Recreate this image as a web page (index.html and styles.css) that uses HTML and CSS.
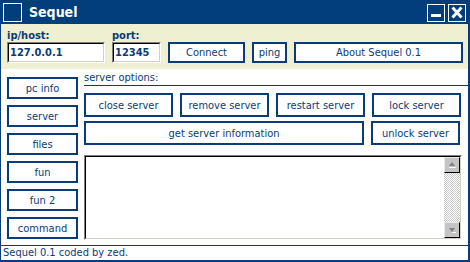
FILE: index.html
```html
<!DOCTYPE html>
<html>
<head>
<meta charset="utf-8">
<link rel="stylesheet" href="styles.css">
</head>
<body>
<div class="window">
  <div class="titlebar">
    <span class="appicon"></span>
    <span class="title">Sequel</span>
    <div class="tb-buttons">
      <span class="tb-btn"><svg width="16" height="16" viewBox="0 0 16 16"><rect x="3" y="9" width="10" height="3" fill="#fff"/></svg></span>
      <span class="tb-btn"><svg width="16" height="16" viewBox="0 0 16 16"><path d="M3.5 2.5 L12.5 12.5 M12.5 2.5 L3.5 12.5" stroke="#fff" stroke-width="3" fill="none"/></svg></span>
    </div>
  </div>
  <div class="frame">
    <div class="conn">
      <div class="field host">
        <label>ip/host:</label>
        <div class="sunken"><div class="input">127.0.0.1</div></div>
      </div>
      <div class="field port">
        <label>port:</label>
        <div class="sunken"><div class="input">12345</div></div>
      </div>
      <button class="btn connect">Connect</button>
      <button class="btn ping">ping</button>
      <button class="btn about">About Sequel 0.1</button>
    </div>
    <div class="main">
      <div class="nav">
        <button class="btn nav-btn">pc info</button>
        <button class="btn nav-btn">server</button>
        <button class="btn nav-btn">files</button>
        <button class="btn nav-btn">fun</button>
        <button class="btn nav-btn">fun 2</button>
        <button class="btn nav-btn">command</button>
      </div>
      <div class="options">
        <div class="legend">server options:</div>
        <div class="row row1">
          <button class="btn opt">close server</button>
          <button class="btn opt">remove server</button>
          <button class="btn opt">restart server</button>
          <button class="btn opt">lock server</button>
        </div>
        <div class="row row2">
          <button class="btn opt wide">get server information</button>
          <button class="btn opt">unlock server</button>
        </div>
        <div class="log sunken">
          <div class="log-inner">
            <div class="log-text"></div>
            <div class="scrollbar">
              <div class="sb-btn"><svg width="14" height="14" viewBox="0 0 14 14"><path d="M7 4 L10 8 L4 8 Z" fill="#808080"/><rect x="4" y="9" width="7" height="1" fill="#fff"/></svg></div>
              <div class="sb-track"></div>
              <div class="sb-btn"><svg width="14" height="14" viewBox="0 0 14 14"><path d="M4 5 L10 5 L7 9 Z" fill="#808080"/><rect x="7" y="9" width="4" height="1" fill="#fff"/></svg></div>
            </div>
          </div>
        </div>
      </div>
    </div>
    <div class="status">Sequel 0.1 coded by zed.</div>
  </div>
</div>
</body>
</html>
```

FILE: styles.css
```css
* { box-sizing: border-box; }

body {
  margin: 0;
  width: 470px;
  height: 262px;
  overflow: hidden;
  font-family: "DejaVu Sans Condensed", "DejaVu Sans", sans-serif;
  font-size: 11px;
  color: #0b3b78;
  background: #fff;
}

.window {
  width: 470px;
  height: 262px;
  display: flex;
  flex-direction: column;
}

.titlebar {
  height: 24px;
  flex-shrink: 0;
  background: #023d7c;
  display: flex;
  align-items: flex-start;
  padding: 3px 4px 0 3px;
}

.appicon {
  width: 19px;
  height: 19px;
  border: 1px solid #fff;
}

.title {
  margin-left: 7px;
  color: #fff;
  font-weight: bold;
  font-size: 14px;
  line-height: 18px;
}

.tb-buttons {
  margin-left: auto;
  margin-top: 1px;
  display: flex;
  gap: 3px;
}

.tb-btn {
  width: 18px;
  height: 18px;
  border: 1px solid #fff;
  display: block;
}
.tb-btn svg { display: block; }

.frame {
  flex: 1;
  display: flex;
  flex-direction: column;
  border-left: 1px solid #0b3b78;
  border-right: 2px solid #0b3b78;
}

.conn {
  height: 45px;
  flex-shrink: 0;
  background: #efefd1;
  display: flex;
  align-items: flex-end;
  gap: 7px;
  padding: 0 0 6px 6px;
}

.field label {
  display: block;
  font-weight: bold;
  line-height: 13px;
}

.sunken {
  border: 1px solid;
  border-color: #808080 #fff #fff #808080;
}

.input {
  height: 19px;
  border: 1px solid;
  border-color: #000 #d4d0c8 #d4d0c8 #000;
  background: #fff;
  font-weight: bold;
  line-height: 17px;
  padding-left: 1px;
}

.host { width: 98px; }
.port { width: 49px; }

.btn {
  background: #fff;
  border: 2px solid #0b3b78;
  color: #0b3b78;
  font: inherit;
  padding: 0;
  margin: 0;
  height: 21px;
  line-height: 17px;
}

.connect { width: 77px; }
.ping { width: 35px; }
.about { width: 169px; }

.main {
  flex: 1;
  display: flex;
  gap: 6px;
  padding-left: 6px;
}

.nav {
  display: flex;
  flex-direction: column;
  gap: 6px;
  padding-top: 8px;
}

.nav-btn {
  width: 71px;
  height: 22px;
}

.options {
  flex: 1;
  padding-top: 2px;
}

.legend {
  line-height: 14px;
  border-bottom: 1px solid #0b3b78;
}

.row {
  display: flex;
  gap: 7px;
}
.row1 { margin-top: 7px; }
.row2 { margin-top: 4px; }

.opt {
  width: 89px;
  height: 24px;
}
.opt.wide { width: 280px; }

.log {
  margin-top: 10px;
  width: 378px;
  height: 85px;
}

.log-inner {
  height: 100%;
  border: 1px solid;
  border-color: #000 #d4d0c8 #d4d0c8 #000;
  display: flex;
}

.log-text { flex: 1; }

.scrollbar {
  width: 16px;
  display: flex;
  flex-direction: column;
}

.sb-btn {
  width: 16px;
  height: 16px;
  background: #c4c4c4;
  border: 1px solid;
  border-color: #e8e8e8 #000 #000 #e8e8e8;
}
.sb-btn svg { display: block; }

.sb-track {
  flex: 1;
  background: repeating-conic-gradient(#c8c8c8 0 25%, #fff 0 50%) 0 0 / 2px 2px;
}

.status {
  height: 17px;
  flex-shrink: 0;
  border-top: 1px solid #0b3b78;
  border-bottom: 2px solid #0b3b78;
  padding-left: 2px;
  line-height: 14px;
}
```
